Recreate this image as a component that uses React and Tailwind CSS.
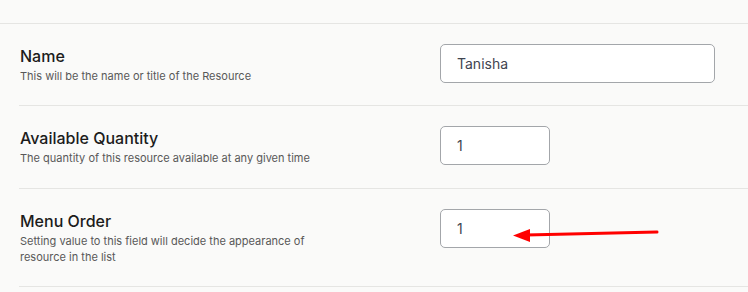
import React from "react";

const rows = [
  { title: "Name", desc: "This will be the name or title of the Resource", value: "Tanisha", wide: true, pb: "pb-[21px]" },
  { title: "Available Quantity", desc: "The quantity of this resource available at any given time", value: "1", pb: "pb-[22px]" },
  { title: "Menu Order", desc: "Setting value to this field will decide the appearance of resource in the list", value: "1", arrow: true, pb: "pb-[21px]" },
];

export default function App() {
  return (
    <div className="w-[748px] h-[292px] overflow-hidden bg-[#fafaf9] font-['Inter',sans-serif]">
      <div className="h-[23px]" />
      <div className="border-t border-[#e5e5e3]">
        <div className="ml-[19px]">
          {rows.map((r, i) => (
            <div key={i} className={"flex items-start border-b border-[#e5e5e3] pt-[20px] " + r.pb}>
              <div className="w-[421px] flex-none pl-[1px]">
                <div className="text-[16px] leading-[24px] font-medium text-[#1c1c1c]">{r.title}</div>
                <div className="max-w-[300px] text-[11px] leading-[16px] text-[#585858]">{r.desc}</div>
              </div>
              <div className="relative">
                <div
                  className={
                    (r.wide ? "w-[275px] " : "w-[110px] ") +
                    "h-[39px] rounded-[5px] border border-[#a3a6aa] bg-white flex items-center pl-[16px] text-[14px] text-[#3f4450]"
                  }
                >
                  {r.value}
                </div>
                {r.arrow && (
                  <svg className="absolute left-[70px] top-[18px]" width="150" height="16" viewBox="0 0 150 16">
                    <line x1="147" y1="5" x2="16" y2="8" stroke="#ff0000" strokeWidth="3" strokeLinecap="round" />
                    <polygon points="3,8.5 20,2 20,15" fill="#ff0000" />
                  </svg>
                )}
              </div>
            </div>
          ))}
        </div>
      </div>
    </div>
  );
}
